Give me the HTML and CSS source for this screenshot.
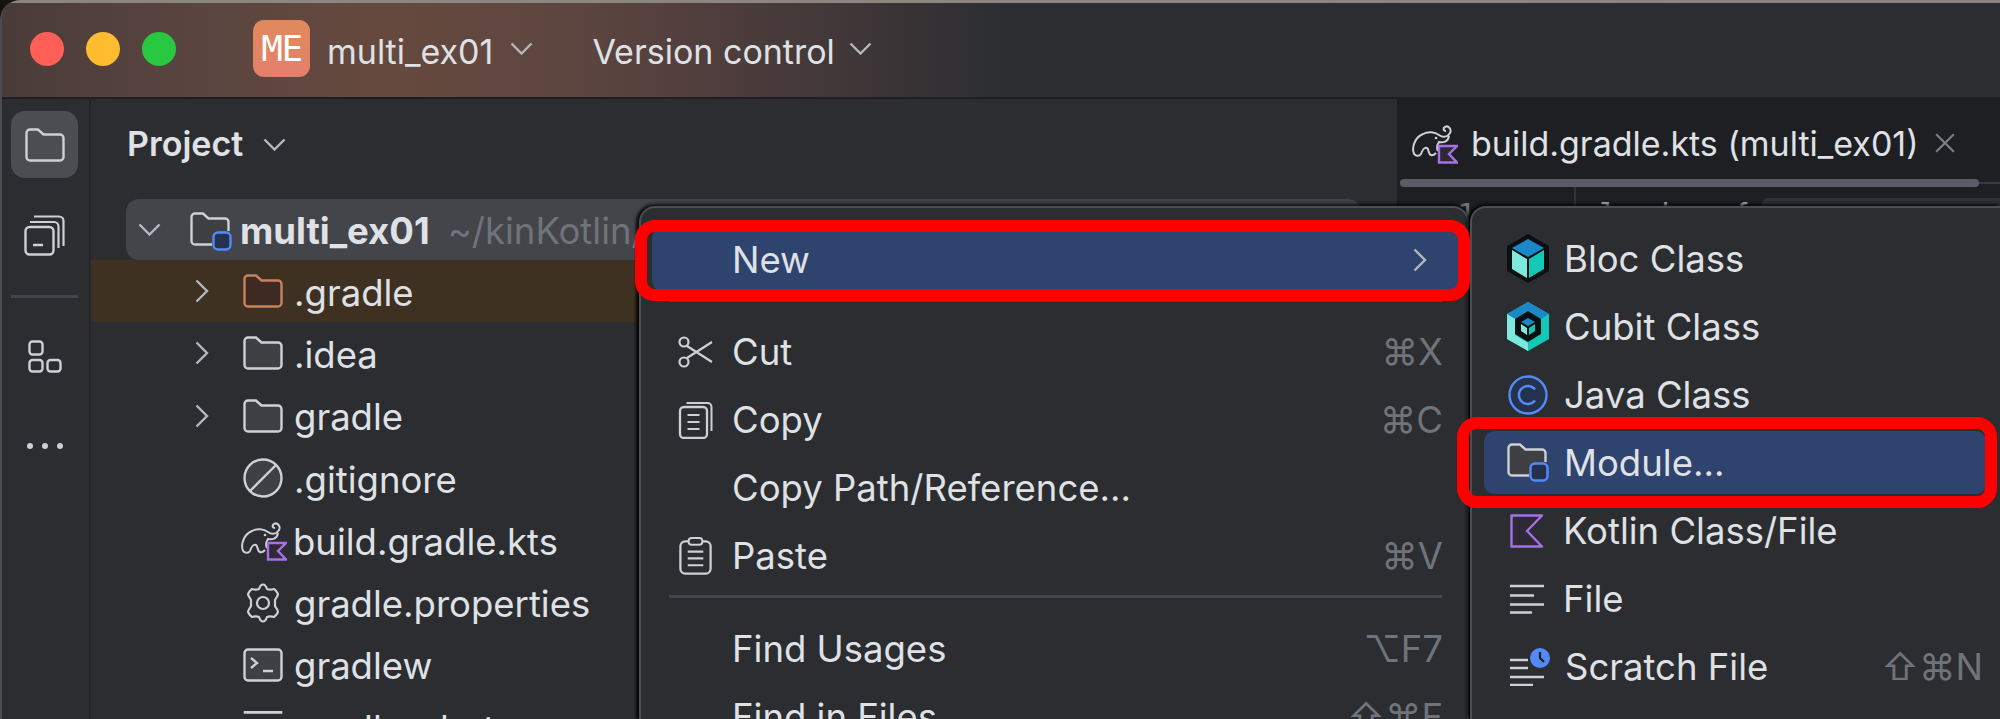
FILE: index.html
```html
<!DOCTYPE html>
<html lang="en">
<head>
    <meta charset="UTF-8">
    <meta name="viewport" content="width=device-width, initial-scale=1.0">
    <title>multi_ex01 - New Module</title>
    <link rel="stylesheet" href="styles.css">
</head>
<body>
    <!-- shared icons -->
    <svg class="sprite" aria-hidden="true">
        <symbol id="i-chevron-down" viewBox="0 0 23 13"><path d="M1.5 1.5 11.5 11.5 21.5 1.5" fill="none" stroke="#b4b8bf" stroke-width="2.4"/></symbol>
        <symbol id="i-chevron-right" viewBox="0 0 14 24"><path d="M1.5 1.5 12 12 1.5 22.5" fill="none" stroke="#b4b8bf" stroke-width="2.4"/></symbol>
        <symbol id="i-folder" viewBox="0 0 40 34"><path d="M1.5 5A3.5 3.5 0 0 1 5 1.500H13L18.500 6.500H35A3.500 3.500 0 0 1 38.500 10V29A3.500 3.500 0 0 1 35 32.500H5A3.500 3.500 0 0 1 1.500 29Z" fill="#3e4044" stroke="#ced0d6" stroke-width="2.4"/></symbol>
        <symbol id="i-folder-open" viewBox="0 0 40 34"><path d="M1.500 5A3.500 3.500 0 0 1 5 1.500H13L18.500 6.500H35A3.500 3.500 0 0 1 38.500 10V29A3.500 3.500 0 0 1 35 32.500H5A3.500 3.500 0 0 1 1.500 29Z" fill="none" stroke="#ced0d6" stroke-width="2.4"/></symbol>
        <symbol id="i-folder-orange" viewBox="0 0 40 34"><path d="M1.500 5A3.500 3.500 0 0 1 5 1.500H13L18.500 6.500H35A3.500 3.500 0 0 1 38.500 10V29A3.500 3.500 0 0 1 35 32.500H5A3.500 3.500 0 0 1 1.500 29Z" fill="#3d2a22" stroke="#c9835c" stroke-width="2.4"/></symbol>
        <symbol id="i-module" viewBox="0 0 42 39"><path d="M22 32.500H5A3.500 3.500 0 0 1 1.500 29V5A3.500 3.500 0 0 1 5 1.500H13L18.500 6.500H35A3.500 3.500 0 0 1 38.500 10V19" fill="#3e4044" stroke="#ced0d6" stroke-width="2.4"/><rect x="23.500" y="20.500" width="17" height="17" rx="4.500" fill="#25324d" stroke="#548af7" stroke-width="2.400"/></symbol>
        <symbol id="i-gradle" viewBox="0 0 46 41"><path d="M1.500 29C0 24 3 14 11 11C16 8 23 9 27 12C31 15 36 14 38 10C40 6 36 2 33 4C31 5 31 8 34 8M37 13C36 19 31 20 27 19C25 22 25 26 26 28M1.500 29C2 33 7 34 9 31C10 28 12 24 15 25C17 26 16 31 19 32C21 33 23 31 24 30" fill="none" stroke="#ced0d6" stroke-width="2"/><circle cx="24" cy="15" r="1.300" fill="#ced0d6"/><path d="M27 23H45L37 31 45 39.500H27Z" fill="#2f2936" stroke="#a571e6" stroke-width="2.400"/></symbol>
        <symbol id="i-bloc" viewBox="0 0 42 49"><path d="M21 0 42 12V37L21 49 0 37V12Z" fill="#0b0f10"/><path d="M21 5 37 14 21 23 5 14Z" fill="#1b87c9"/><path d="M5 16 20 25V44L5 35Z" fill="#7ce9dc"/><path d="M37 16 22 25V44L37 35Z" fill="#14c8b8"/></symbol>
        <symbol id="i-cubit" viewBox="0 0 42 49"><path d="M21 0 42 12V37L21 49 0 37V12Z" fill="#14c8b8"/><path d="M21 0 42 12 34 17 21 9 8 17 0 12Z" fill="#1b87c9"/><path d="M0 12 8 17V33L21 41V49L0 37Z" fill="#7ce9dc"/><path d="M21 9 34 17V32L21 40 8 32V17Z" fill="#0b0f10"/><path d="M21 16 28 20 21 24 14 20Z" fill="#1b87c9"/><path d="M14 22 20 26V33L14 29Z" fill="#7ce9dc"/><path d="M28 22 22 26V33L28 29Z" fill="#14c8b8"/></symbol>
        <symbol id="i-java" viewBox="0 0 40 40"><circle cx="20" cy="20" r="18.500" fill="#25324d" stroke="#548af7" stroke-width="2.400"/><path d="M27 14.500A9 9 0 1 0 27 25.500" fill="none" stroke="#548af7" stroke-width="2.400"/></symbol>
        <symbol id="i-kotlin" viewBox="0 0 34 34"><path d="M1.500 1.500H32L17 17 32 32.500H1.500Z" fill="#2f2936" stroke="#a571e6" stroke-width="2.400" stroke-linejoin="round"/></symbol>
        <symbol id="i-lines" viewBox="0 0 34 30"><path d="M0 2H34M0 11.500H24M0 20.500H34M0 28.500H22" fill="none" stroke="#ced0d6" stroke-width="2.400"/></symbol>
        <symbol id="i-scratch" viewBox="0 0 40 38"><path d="M0 12H18M0 20H18M0 29H34M0 37H23" fill="none" stroke="#ced0d6" stroke-width="2.400"/><circle cx="30" cy="10" r="10" fill="#548af7"/><path d="M30 4V10L34 14" fill="none" stroke="#1e1f22" stroke-width="2.200"/></symbol>
        <symbol id="i-gitignore" viewBox="0 0 40 40"><circle cx="20" cy="20" r="18.500" fill="#3e4044" stroke="#ced0d6" stroke-width="2.400"/><path d="M33 7 7 33" stroke="#ced0d6" stroke-width="2.400"/></symbol>
        <symbol id="i-gear" viewBox="0 0 38 40"><path d="M19 1.500C21 1.500 22 3 23 6 25 7 27 7 30 6 32 7 33 9 34 11 34 13 32 15 31 17V23C32 25 34 27 34 29 33 31 32 33 30 34 27 33 25 33 23 34 22 37 21 38.500 19 38.500 17 38.500 16 37 15 34 13 33 11 33 8 34 6 33 5 31 4 29 4 27 6 25 7 23V17C6 15 4 13 4 11 5 9 6 7 8 6 11 7 13 7 15 6 16 3 17 1.500 19 1.500Z" fill="none" stroke="#ced0d6" stroke-width="2.200" stroke-linejoin="round"/><circle cx="19" cy="20" r="6" fill="none" stroke="#ced0d6" stroke-width="2.200"/></symbol>
        <symbol id="i-terminal" viewBox="0 0 40 34"><rect x="1.500" y="1.500" width="37" height="31" rx="3.500" fill="#3e4044" stroke="#ced0d6" stroke-width="2.400"/><path d="M8 10 14 15 8 20M20 23H30" fill="none" stroke="#ced0d6" stroke-width="2.400"/></symbol>
        <symbol id="i-scissors" viewBox="0 0 35 34"><circle cx="6" cy="7" r="4.500" fill="none" stroke="#ced0d6" stroke-width="2.200"/><circle cx="6" cy="27" r="4.500" fill="none" stroke="#ced0d6" stroke-width="2.200"/><path d="M9 11 34 27M9 23 34 7" fill="none" stroke="#ced0d6" stroke-width="2.200"/></symbol>
        <symbol id="i-copy" viewBox="0 0 34 38"><path d="M8 2H29A4 4 0 0 1 33 6V30" fill="none" stroke="#ced0d6" stroke-width="2"/><rect x="1.500" y="6" width="27" height="31" rx="4" fill="#2b2d30" stroke="#ced0d6" stroke-width="2.300"/><path d="M9 14H21M9 21H21M9 28H21" stroke="#ced0d6" stroke-width="2.200"/></symbol>
        <symbol id="i-paste" viewBox="0 0 34 39"><rect x="1.500" y="4.500" width="31" height="33" rx="5" fill="none" stroke="#ced0d6" stroke-width="2.300"/><rect x="10" y="1" width="14" height="7" rx="3" fill="#2b2d30" stroke="#ced0d6" stroke-width="2"/><path d="M9 15H25M9 22H25M9 29H25" stroke="#ced0d6" stroke-width="2.200"/></symbol>
    </svg>

    <div class="window">
        <header class="titlebar">
            <div class="lights">
                <span class="light red"></span>
                <span class="light yellow"></span>
                <span class="light green"></span>
            </div>
            <div class="project-badge">ME</div>
            <span class="title-text">multi_ex01</span>
            <svg class="title-chevron"><use href="#i-chevron-down"/></svg>
            <span class="title-text vcs">Version control</span>
            <svg class="title-chevron vcs-chevron"><use href="#i-chevron-down"/></svg>
        </header>

        <div class="main">
            <aside class="toolstrip">
                <div class="tool-active"><svg class="tool-folder"><use href="#i-folder-open"/></svg></div>
                <svg class="tool-commit" viewBox="0 0 41 41">
                    <path d="M10 1.500H35A4.500 4.500 0 0 1 39.500 6V31M6 7H30A4.500 4.500 0 0 1 34.500 11.500V33" fill="none" stroke="#ced0d6" stroke-width="2.200"/>
                    <rect x="1.500" y="12" width="28" height="27.500" rx="4" fill="#2b2d30" stroke="#ced0d6" stroke-width="2.400"/>
                    <path d="M9 30H19" stroke="#ced0d6" stroke-width="2.400"/>
                </svg>
                <div class="tool-sep"></div>
                <svg class="tool-structure" viewBox="0 0 34 33">
                    <rect x="1.500" y="1.500" width="13" height="13" rx="3" fill="none" stroke="#ced0d6" stroke-width="2.400"/>
                    <rect x="1.500" y="20" width="13" height="11.500" rx="3" fill="none" stroke="#ced0d6" stroke-width="2.400"/>
                    <rect x="19.500" y="20" width="13" height="11.500" rx="3" fill="none" stroke="#ced0d6" stroke-width="2.400"/>
                </svg>
                <div class="tool-dots"><i></i><i></i><i></i></div>
            </aside>

            <section class="project">
                <div class="project-head">
                    <span class="project-title">Project</span>
                    <svg class="title-chevron"><use href="#i-chevron-down"/></svg>
                </div>
                <div class="tree">
                    <div class="tree-row root">
                        <svg class="twisty"><use href="#i-chevron-down"/></svg>
                        <svg class="root-icon"><use href="#i-module"/></svg>
                        <span class="root-name">multi_ex01</span>
                        <span class="root-path">~/kinKotlin/multi_ex01</span>
                    </div>
                    <div class="tree-row ignored">
                        <svg class="twisty"><use href="#i-chevron-right"/></svg>
                        <svg class="tree-icon"><use href="#i-folder-orange"/></svg>
                        <span>.gradle</span>
                    </div>
                    <div class="tree-row">
                        <svg class="twisty"><use href="#i-chevron-right"/></svg>
                        <svg class="tree-icon"><use href="#i-folder"/></svg>
                        <span>.idea</span>
                    </div>
                    <div class="tree-row">
                        <svg class="twisty"><use href="#i-chevron-right"/></svg>
                        <svg class="tree-icon"><use href="#i-folder"/></svg>
                        <span>gradle</span>
                    </div>
                    <div class="tree-row">
                        <span class="twisty"></span>
                        <svg class="tree-icon tall"><use href="#i-gitignore"/></svg>
                        <span>.gitignore</span>
                    </div>
                    <div class="tree-row">
                        <span class="twisty"></span>
                        <svg class="tree-icon gradle-icon"><use href="#i-gradle"/></svg>
                        <span>build.gradle.kts</span>
                    </div>
                    <div class="tree-row">
                        <span class="twisty"></span>
                        <svg class="tree-icon tall"><use href="#i-gear"/></svg>
                        <span>gradle.properties</span>
                    </div>
                    <div class="tree-row">
                        <span class="twisty"></span>
                        <svg class="tree-icon"><use href="#i-terminal"/></svg>
                        <span>gradlew</span>
                    </div>
                    <div class="tree-row">
                        <span class="twisty"></span>
                        <svg class="tree-icon"><use href="#i-lines"/></svg>
                        <span>gradlew.bat</span>
                    </div>
                </div>
            </section>

            <section class="editor">
                <div class="tabs">
                    <svg class="tab-icon"><use href="#i-gradle"/></svg>
                    <span class="tab-name">build.gradle.kts (multi_ex01)</span>
                    <svg class="tab-close" viewBox="0 0 20 20"><path d="M2 2 18 18M18 2 2 18" stroke="#7a7e85" stroke-width="2"/></svg>
                </div>
                <div class="tab-strip">
                    <div class="tab-rule"></div>
                    <div class="tab-rest"></div>
                </div>
                <div class="code">
                    <div class="gutter">1</div>
                    <div class="code-line">plugins {<span class="inlay">this: PluginDependenciesSpecScope</span></div>
                </div>
            </section>
        </div>
    </div>

    <!-- context menu -->
    <div class="menu context">
        <div class="menu-item active">
            <span class="menu-icon"></span>
            <span class="menu-label">New</span>
            <svg class="submenu-arrow"><use href="#i-chevron-right"/></svg>
        </div>
        <div class="menu-sep"></div>
        <div class="menu-item">
            <svg class="menu-icon"><use href="#i-scissors"/></svg>
            <span class="menu-label">Cut</span>
            <span class="shortcut">⌘X</span>
        </div>
        <div class="menu-item">
            <svg class="menu-icon"><use href="#i-copy"/></svg>
            <span class="menu-label">Copy</span>
            <span class="shortcut">⌘C</span>
        </div>
        <div class="menu-item">
            <span class="menu-icon"></span>
            <span class="menu-label">Copy Path/Reference...</span>
        </div>
        <div class="menu-item">
            <svg class="menu-icon"><use href="#i-paste"/></svg>
            <span class="menu-label">Paste</span>
            <span class="shortcut">⌘V</span>
        </div>
        <div class="menu-sep"></div>
        <div class="menu-item">
            <span class="menu-icon"></span>
            <span class="menu-label">Find Usages</span>
            <span class="shortcut">⌥F7</span>
        </div>
        <div class="menu-item">
            <span class="menu-icon"></span>
            <span class="menu-label">Find in Files...</span>
            <span class="shortcut">⇧⌘F</span>
        </div>
    </div>

    <!-- New submenu -->
    <div class="menu submenu">
        <div class="menu-item">
            <svg class="menu-icon bloc"><use href="#i-bloc"/></svg>
            <span class="menu-label">Bloc Class</span>
        </div>
        <div class="menu-item">
            <svg class="menu-icon bloc"><use href="#i-cubit"/></svg>
            <span class="menu-label">Cubit Class</span>
        </div>
        <div class="menu-item">
            <svg class="menu-icon java"><use href="#i-java"/></svg>
            <span class="menu-label">Java Class</span>
        </div>
        <div class="menu-item active">
            <svg class="menu-icon module"><use href="#i-module"/></svg>
            <span class="menu-label">Module...</span>
        </div>
        <div class="menu-item">
            <svg class="menu-icon small"><use href="#i-kotlin"/></svg>
            <span class="menu-label">Kotlin Class/File</span>
        </div>
        <div class="menu-item">
            <svg class="menu-icon small lines"><use href="#i-lines"/></svg>
            <span class="menu-label">File</span>
        </div>
        <div class="menu-item">
            <svg class="menu-icon scratch"><use href="#i-scratch"/></svg>
            <span class="menu-label">Scratch File</span>
            <span class="shortcut">⇧⌘N</span>
        </div>
        <div class="menu-item">
            <svg class="menu-icon small"><use href="#i-folder"/></svg>
            <span class="menu-label">Directory</span>
        </div>
    </div>

    <!-- red annotations from the screenshot -->
    <div class="callout callout-new"></div>
    <div class="callout callout-module"></div>
</body>
</html>
```

FILE: styles.css
```css
* {
    box-sizing: border-box;
}

html, body {
    height: 100%;
}

body {
    margin: 0;
    overflow: hidden;
    position: relative;
    background-color: #17130f;
    font-family: Inter, "Liberation Sans", sans-serif;
    font-size: 36.5px;
    color: #dfe1e5;
}

.sprite {
    display: none;
}

.window {
    height: 719px;
    display: flex;
    flex-direction: column;
    border-left: 2px solid #4a4c50;
    border-top-left-radius: 20px;
    overflow: hidden;
    background-color: #2b2d30;
}

/* Title bar */
.titlebar {
    flex: none;
    height: 97px;
    padding: 0 0 3px 28px;
    display: flex;
    align-items: center;
    border-top: 3px solid #8c8580;
    font-size: 34px;
    background: linear-gradient(90deg, #4a3c39 0, #5a4540 200px, #66493e 380px, #5e4640 560px, #46393a 800px, #2c2e31 1000px, #2b2d30 100%);
}

.lights {
    display: flex;
    gap: 22px;
}

.light {
    width: 34px;
    height: 34px;
    border-radius: 50%;
}

.red { background-color: #ff5f57; }
.yellow { background-color: #febc2e; }
.green { background-color: #28c840; }

.project-badge {
    width: 57px;
    height: 57px;
    margin-left: 77px;
    margin-right: 17px;
    border-radius: 11px;
    background: linear-gradient(180deg, #e08a5c, #e47f6d);
    color: #fff;
    font-family: "DejaVu Sans Mono", monospace;
    font-size: 36px;
    letter-spacing: -1.5px;
    line-height: 57px;
    text-align: center;
}

.title-text {
    padding-top: 5px;
    white-space: nowrap;
}

.title-chevron {
    width: 23px;
    height: 13px;
    margin-left: 17px;
}

.vcs {
    margin-left: 59px;
}

.vcs-chevron {
    margin-left: 14px;
}

/* Main area */
.main {
    flex: 1;
    display: flex;
    min-height: 0;
    border-top: 2px solid #1e1f22;
}

.toolstrip {
    flex: none;
    width: 89px;
    padding: 12px 2px 0 0;
    display: flex;
    flex-direction: column;
    align-items: center;
    border-right: 2px solid #232528;
}

.tool-active {
    width: 67px;
    height: 67px;
    display: flex;
    align-items: center;
    justify-content: center;
    border-radius: 14px;
    background-color: #4a4d51;
}

.tool-folder {
    width: 40px;
    height: 34px;
}

.tool-commit {
    width: 41px;
    height: 41px;
    margin-top: 37px;
}

.tool-sep {
    width: 67px;
    height: 3px;
    margin-top: 39px;
    background-color: #43454a;
}

.tool-structure {
    width: 34px;
    height: 33px;
    margin-top: 42px;
}

.tool-dots {
    margin-top: 70px;
    display: flex;
    gap: 9px;
}

.tool-dots i {
    width: 6px;
    height: 6px;
    border-radius: 50%;
    background-color: #ced0d6;
}

/* Project panel */
.project {
    flex: none;
    width: 1306px;
}

.project-head {
    height: 100px;
    padding: 25px 0 0 36px;
    display: flex;
    align-items: flex-start;
    font-size: 34px;
}

.project-head .title-chevron {
    margin: 14px 0 0 20px;
}

.project-title {
    font-weight: 600;
    line-height: 40px;
}

.tree-row {
    height: 62.3px;
    padding-left: 104px;
    display: flex;
    align-items: center;
    white-space: nowrap;
}

.tree-row span:last-child {
    margin-left: 11px;
    padding-top: 3px;
}

.twisty {
    flex: none;
    width: 14px;
    height: 24px;
    margin-right: 34px;
}

.tree-icon {
    flex: none;
    width: 40px;
    height: 34px;
}

.tree-icon.tall {
    height: 40px;
}

.tree-icon.gradle-icon {
    height: 41px;
    width: 46px;
    margin: 0 -5px 0 -2px;
}

.tree-row.root {
    height: 61px;
    margin: 0 36px 0 35px;
    padding-left: 12px;
    border-radius: 13px;
    background-color: #43454a;
    overflow: hidden;
}

.root .twisty {
    width: 23px;
    height: 13px;
    margin-right: 29px;
}

.root-icon {
    flex: none;
    width: 42px;
    height: 39px;
    margin-top: 4px;
}

.root-name {
    margin-left: 8px;
    padding-top: 3px;
    font-weight: 700;
}

.tree-row.root .root-path {
    margin-left: 18px;
    color: #6f737a;
}

.tree-row.ignored {
    background-color: #3e3122;
}

/* Editor */
.editor {
    flex: 1;
    min-width: 0;
    overflow: hidden;
    background-color: #1e1f22;
}

.tabs {
    height: 80px;
    padding: 8px 0 0 15px;
    display: flex;
    align-items: center;
    font-size: 34px;
}

.tab-icon {
    flex: none;
    width: 46px;
    height: 41px;
}

.tab-name {
    margin-left: 13px;
    white-space: nowrap;
}

.tab-close {
    flex: none;
    width: 22px;
    height: 22px;
    margin-left: 15px;
}

.tab-strip {
    height: 8px;
    padding-left: 3px;
    display: flex;
    align-items: center;
}

.tab-rule {
    flex: none;
    width: 579px;
    height: 8px;
    border-radius: 4px;
    background-color: #5a5d63;
}

.tab-rest {
    flex: 1;
    height: 2px;
    background-color: #393b40;
}

.code {
    display: flex;
    height: 80px;
    font-family: "DejaVu Sans Mono", monospace;
    font-size: 31.5px;
    line-height: 40px;
    white-space: nowrap;
    color: #bcbec4;
}

.gutter {
    flex: none;
    width: 179px;
    padding: 8px 0 0 60px;
    border-right: 2px solid #313438;
    color: #6f737a;
}

.code-line {
    padding: 8px 0 0 4px;
}

.inlay {
    margin-left: 11px;
    padding: 4px 8px;
    border-radius: 6px;
    background-color: #2f3136;
    font-size: 26px;
    color: #7a7e85;
}

/* Popup menus */
.menu {
    position: absolute;
    top: 206px;
    bottom: 0;
    overflow: hidden;
    background-color: #2b2d30;
    border: 2px solid #4b4e54;
    border-bottom: 0;
    border-radius: 16px 16px 0 0;
    box-shadow: 0 -2px 4px rgba(0, 0, 0, 0.7), -3px 0 3px rgba(0, 0, 0, 0.8);
}

.context {
    left: 639px;
    width: 830px;
    padding: 20px 8px 0 11px;
}

.submenu {
    left: 1470px;
    right: 0;
    padding: 19px 14px 0 12px;
    border-right: 0;
    border-top-right-radius: 0;
}

.menu-item {
    height: 63px;
    margin-bottom: 5px;
    padding: 0 16px 0 26px;
    display: flex;
    align-items: center;
    border-radius: 10px;
    white-space: nowrap;
}

.menu-item.active {
    background-color: #2e436e;
}

.menu-icon {
    flex: none;
    width: 35px;
    height: 38px;
    margin-right: 19px;
}

.menu-label {
    flex: 1;
}

.shortcut {
    font-family: Inter, "DejaVu Sans", sans-serif;
    color: #6f737a;
}

.submenu-arrow {
    flex: none;
    width: 14px;
    height: 24px;
    margin-right: 16px;
}

.menu-sep {
    height: 3px;
    margin: 8px 17px 18px 17px;
    background-color: #43454a;
}

.menu-sep ~ .menu-sep {
    margin-bottom: 19px;
}

/* submenu rows use a wider icon column */
.submenu .menu-item {
    padding: 0 3px 0 23px;
}

.submenu .menu-icon {
    width: 42px;
    height: 49px;
    margin-right: 15px;
}

.submenu .menu-icon.java {
    width: 42px;
    height: 40px;
}

.submenu .menu-icon.module {
    height: 39px;
}

.submenu .menu-icon.small {
    width: 34px;
    height: 34px;
    margin: 0 19px 0 3px;
}

.submenu .menu-icon.lines {
    height: 30px;
}

.submenu .menu-icon.scratch {
    width: 40px;
    height: 38px;
    margin: 0 15px 0 3px;
}

/* Annotations */
.callout {
    position: absolute;
    border: 12px solid #ff0000;
    border-radius: 20px;
}

.callout-new {
    left: 635px;
    top: 220px;
    width: 835px;
    height: 81px;
}

.callout-module {
    left: 1457px;
    top: 417px;
    width: 540px;
    height: 91px;
}
```
